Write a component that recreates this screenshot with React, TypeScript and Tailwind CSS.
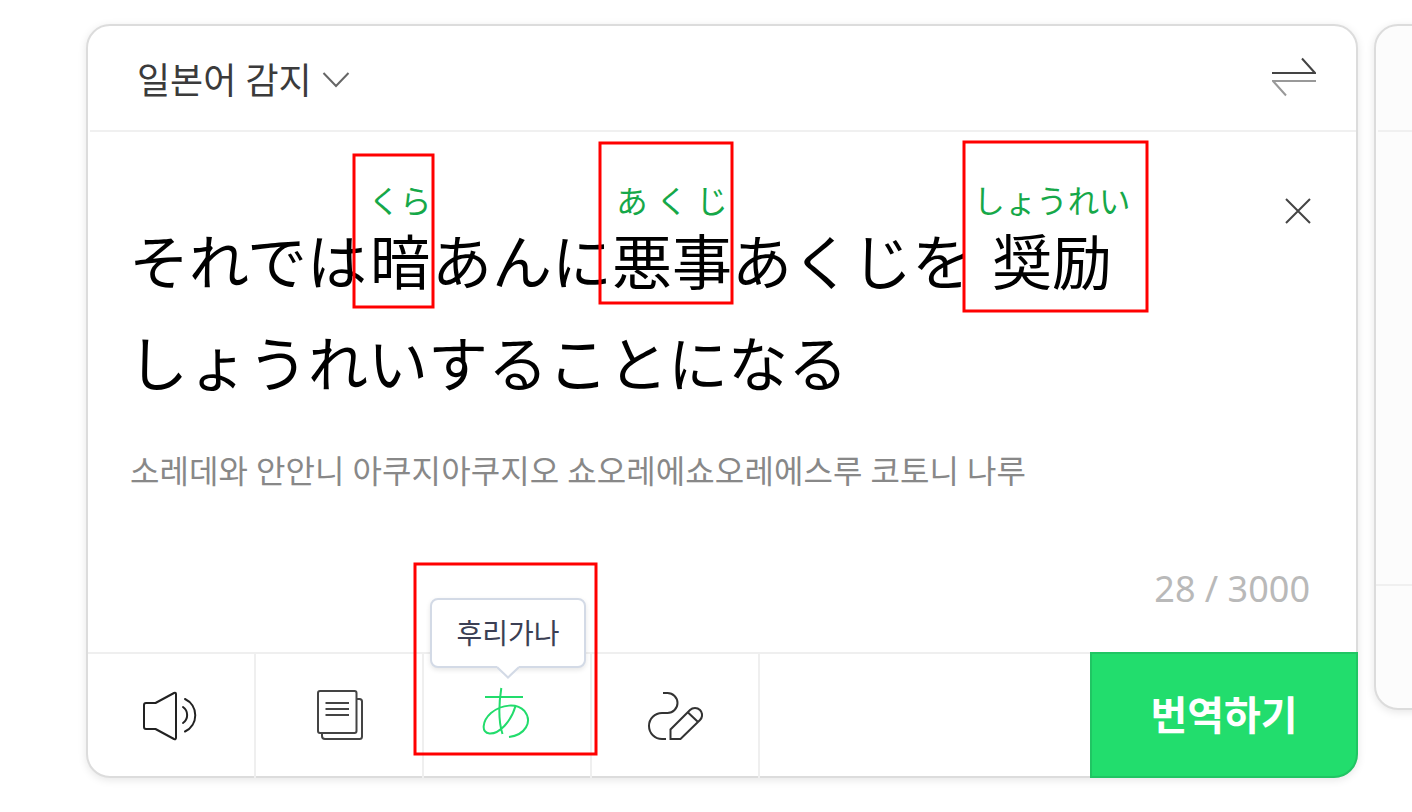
import type { ReactNode } from "react";

type Segment = { base: string; reading?: string; className: string; readingClass?: string };

const segments: Segment[] = [
  { base: "それでは", className: "w-[240px]" },
  { base: "暗", reading: "くら", className: "w-[64px]", readingClass: "justify-center" },
  { base: "あんに", className: "w-[180px]" },
  { base: "悪事", reading: "あくじ", className: "w-[120px]", readingClass: "justify-around" },
  { base: "あくじを", className: "w-[240px]" },
  { base: "奨励", reading: "しょうれい", className: "w-[160px]", readingClass: "justify-center" },
];

const marks = [
  { x: 354, y: 155, width: 79, height: 152 },
  { x: 600, y: 143, width: 132, height: 160 },
  { x: 964, y: 142, width: 183, height: 169 },
  { x: 415, y: 564, width: 181, height: 190 },
];

function Furigana({ base, reading, className, readingClass }: Segment) {
  return (
    <span className={`flex shrink-0 flex-col items-center whitespace-nowrap ${className}`}>
      <span className={`flex h-[35px] w-full text-[31.4px] leading-[35px] text-[#16a849] ${readingClass ?? ""}`}>
        {reading && [...reading].map((ch, i) => <span key={i}>{ch}</span>)}
      </span>
      <span className="h-[84px] text-[60px] leading-[84px]">{base}</span>
    </span>
  );
}

function Tool({ label, children }: { label: string; children: ReactNode }) {
  return (
    <button type="button" aria-label={label} className="relative -mb-0.5 flex w-[168px] justify-center border-r-2 border-[#efefef]">
      {children}
    </button>
  );
}

function SpeakerIcon() {
  return (
    <svg className="mt-9 h-14 w-14" viewBox="0 0 56 56" fill="none" stroke="#222" strokeWidth="2" strokeLinecap="round" strokeLinejoin="round">
      <path d="M3 13H12.500L31 3q2 -0.800 2 1.200V47.800q0 2 -2 1.200L12.500 39H3q-2 0-2-2V15q0-2 2-2z" />
      <path d="M40 17a9.800 9.800 0 0 1 0 16M42 9a18 18 0 0 1 0 32.500" />
    </svg>
  );
}

function PagesIcon() {
  return (
    <svg className="mt-9 h-14 w-14" viewBox="0 0 56 56" fill="none" stroke="#444" strokeWidth="2">
      <rect x="7" y="1" width="38.500" height="42" rx="2" />
      <path d="M45.500 9H48.500q2.500 0 2.500 2.500V46.500q0 2.500-2.500 2.500H14q-3 0-3-3v-3M14.500 13h23.500M14.500 19h23.500M14.500 25h23.500" />
    </svg>
  );
}

function KanaIcon() {
  return (
    <svg className="mt-8 h-14 w-14" viewBox="0 0 56 56" fill="none" stroke="#22dc6c" strokeWidth="2">
      <path d="M6 11h38M22.300 2C19.500 20 19.300 35 23.500 48M36.500 20C32 36 20 48 10.500 47.500C2 47 3 35 12 27C23 18 38 17 45.500 25C54 36 46 49 30 51" />
    </svg>
  );
}

function PenIcon() {
  return (
    <svg className="mt-9 h-14 w-14" viewBox="0 0 56 56" fill="none" stroke="#333" strokeWidth="2">
      <path d="M16 3h4.500a10 10 0 0 1 0 20H15a13 13 0 0 0 0 26h4" />
      <path d="M23.500 49V39.500L43 20a7 7 0 0 1 10 10L33.500 49zM41 22.500l9.500 9" />
    </svg>
  );
}

function Tooltip() {
  return (
    <div className="absolute -top-[56px] left-[6px] z-10 flex h-[70px] w-[156px] items-center justify-center rounded-lg border-2 border-[#d3dae6] bg-white pb-0.5 text-[28px] leading-none text-[#3b3f54] shadow-[0_2px_5px_rgba(0,0,0,0.1)]">
      후리가나
      <svg className="absolute -bottom-[13px] left-[65px]" width="22" height="14" viewBox="0 0 22 14">
        <path d="M0 0H22V2L11 12.500L0 2Z" fill="#fff" />
        <path d="M0 2L11 12.500L22 2" fill="none" stroke="#d3dae6" strokeWidth="2" />
      </svg>
    </div>
  );
}

function SourcePanel() {
  return (
    <section className="flex h-[754px] w-[1272px] shrink-0 flex-col rounded-3xl border-2 border-[#dcdcdc] bg-white shadow-[0_2px_8px_rgba(0,0,0,0.1)]">
      <header className="ml-0.5 flex h-[106px] items-center justify-between border-b-2 border-[#f0f0f0] pr-10 pl-[47px]">
        <button type="button" className="flex items-center gap-[10px] text-[36px] leading-none text-[#3b3b3b] [word-spacing:1px]">
          일본어 감지
          <svg className="mt-1" width="28" height="18" viewBox="0 0 28 18" fill="none" stroke="#666" strokeWidth="2">
            <path d="M1.500 2L14 15L26.500 2" />
          </svg>
        </button>
        <svg className="-mt-0.5" width="44" height="40" viewBox="0 0 44 40" fill="none" strokeWidth="2">
          <path d="M0 16H43L30 1.500" stroke="#444" />
          <path d="M44 24H1L14 38.500" stroke="#999" />
        </svg>
      </header>

      <div className="flex h-[520px] flex-col">
        <div className="flex justify-between pt-[50px] pr-[45px] pl-[40px] text-black">
          <p className="flex">
            {segments.map((segment, i) => (
              <Furigana key={i} {...segment} />
            ))}
          </p>
          <svg className="mt-4" width="26" height="26" viewBox="0 0 26 26" stroke="#444" strokeWidth="2">
            <path d="M1 1L25 25M25 1L1 25" />
          </svg>
        </div>
        <p className="mt-[18px] h-[84px] pl-[40px] text-[60px] leading-[84px] text-black">しょうれいすることになる</p>
        <p className="mt-[46px] pl-[42px] text-[32px] leading-[40px] tracking-[0.1px] text-[#888] [word-spacing:0.6px]">
          소레데와 안안니 아쿠지아쿠지오 쇼오레에쇼오레에스루 코토니 나루
        </p>
        <p className="mt-auto pr-[46px] pb-[38px] text-right font-['Noto_Sans',sans-serif] text-[36px] leading-[50px] text-[#b9b9b9]">28 / 3000</p>
      </div>

      <footer className="flex flex-1 border-t-2 border-[#efefef]">
        <Tool label="듣기"><SpeakerIcon /></Tool>
        <Tool label="복사"><PagesIcon /></Tool>
        <Tool label="후리가나">
          <Tooltip />
          <KanaIcon />
        </Tool>
        <Tool label="필기"><PenIcon /></Tool>
        <button type="button" className="-mt-0.5 -mr-0.5 -mb-0.5 ml-auto w-[268px] rounded-br-3xl border-2 border-[#20c563] bg-[#22dd6d] pb-1 text-[40px] leading-none font-bold text-white">
          번역하기
        </button>
      </footer>
    </section>
  );
}

function TargetPanel() {
  return (
    <section className="flex h-[686px] w-[300px] shrink-0 flex-col rounded-3xl border-2 border-[#dcdcdc] bg-[#fcfcfc] shadow-[0_2px_8px_rgba(0,0,0,0.1)]">
      <div className="ml-0.5 h-[106px] border-b-2 border-[#f0f0f0]" />
      <div className="h-[454px] border-b-2 border-[#f0f0f0]" />
    </section>
  );
}

export default function App() {
  return (
    <main className="relative flex h-[812px] w-[1412px] gap-4 overflow-hidden bg-white pt-6 pl-[86px] font-['Noto_Sans_CJK_KR','Noto_Sans_CJK_JP',sans-serif]">
      <SourcePanel />
      <TargetPanel />
      <svg className="pointer-events-none absolute inset-0 z-20" width="1412" height="812" fill="none" stroke="#f00" strokeWidth="3">
        {marks.map((mark) => (
          <rect key={mark.x} {...mark} />
        ))}
      </svg>
    </main>
  );
}
